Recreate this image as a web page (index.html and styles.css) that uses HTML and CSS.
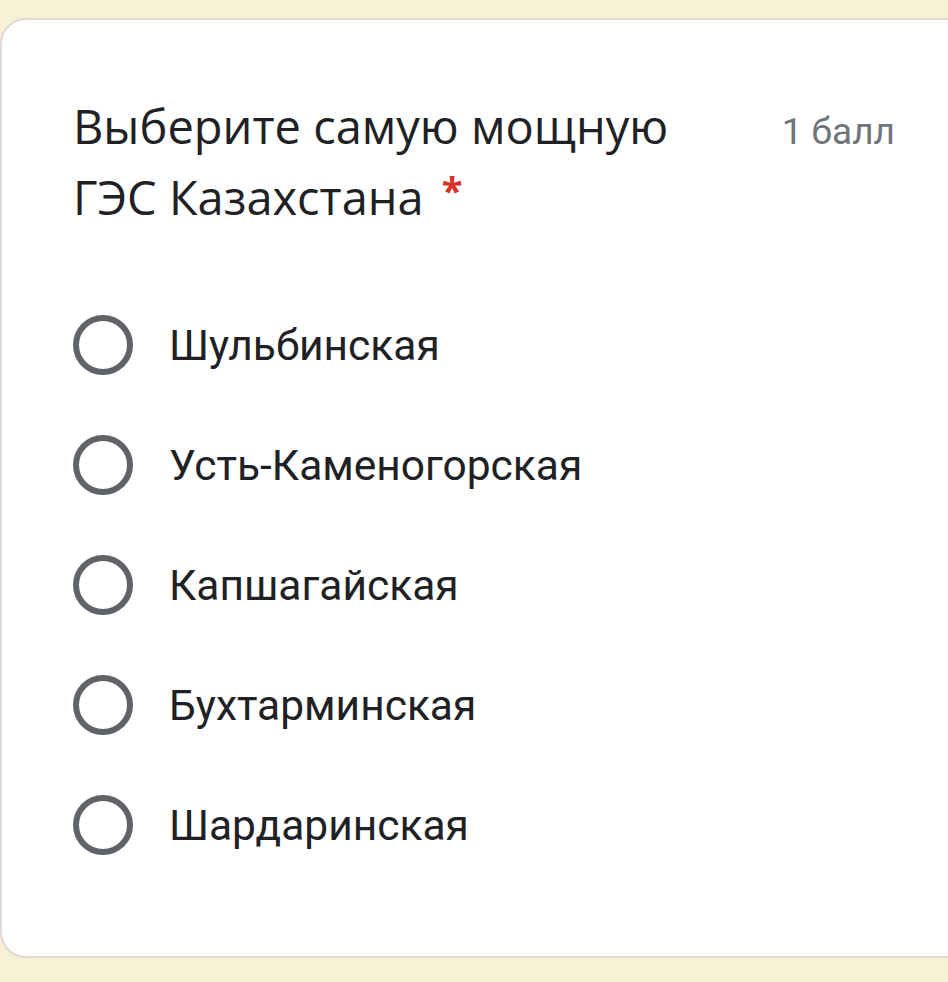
FILE: index.html
```html
<!DOCTYPE html>
<html lang="ru">
<head>
<meta charset="utf-8">
<link rel="stylesheet" href="styles.css">
</head>
<body>
<div class="card">
  <div class="header">
    <div class="title">Выберите самую мощную ГЭС Казахстана<span class="req">*</span></div>
    <div class="points">1 балл</div>
  </div>
  <div class="options">
    <div class="option"><span class="radio"></span><span class="label">Шульбинская</span></div>
    <div class="option"><span class="radio"></span><span class="label">Усть-Каменогорская</span></div>
    <div class="option"><span class="radio"></span><span class="label">Капшагайская</span></div>
    <div class="option"><span class="radio"></span><span class="label">Бухтарминская</span></div>
    <div class="option"><span class="radio"></span><span class="label">Шардаринская</span></div>
  </div>
</div>
</body>
</html>
```
FILE: styles.css
```css
html, body {
  margin: 0;
  padding: 0;
  background: #f8f0d3;
  overflow: hidden;
}
.card {
  margin-top: 18px;
  margin-left: 0;
  width: 1000px;
  height: 940px;
  box-sizing: border-box;
  background: #fff;
  border: 2px solid #dcdad6;
  border-radius: 26px;
  padding: 71px 0 0 71px;
}
.header {
  display: flex;
  align-items: flex-start;
  width: 822px;
  justify-content: space-between;
}
.title {
  width: 640px;
  font-family: "Open Sans", sans-serif;
  font-size: 47px;
  line-height: 71px;
  color: #202124;
}
.req {
  display: inline-block;
  color: #d93025;
  font-size: 38px;
  font-weight: 700;
  line-height: 34px;
  margin-left: 18px;
  vertical-align: 10px;
}
.points {
  margin-top: 5px;
  font-family: Roboto, sans-serif;
  font-size: 37px;
  line-height: 71px;
  color: #70757a;
}
.options {
  display: flex;
  flex-direction: column;
  margin-top: 52px;
}
.option {
  display: flex;
  align-items: center;
  height: 120px;
}
.radio {
  width: 60px;
  height: 60px;
  box-sizing: border-box;
  border: 6px solid #5f6368;
  border-radius: 50%;
  flex: none;
}
.label {
  margin-left: 36px;
  font-family: Roboto, sans-serif;
  font-size: 42.5px;
  color: #202124;
}
```
